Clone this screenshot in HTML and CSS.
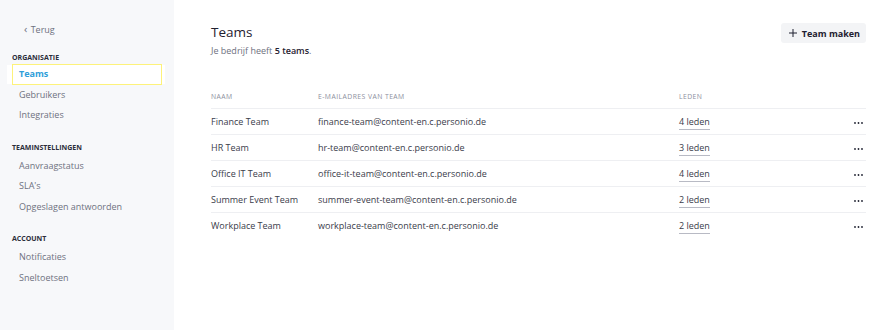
FILE: index.html
```html
<!DOCTYPE html>
<html lang="nl">
<head>
  <meta charset="UTF-8">
  <title>Teams</title>
  <link rel="stylesheet" href="styles.css">
</head>
<body>
  <aside class="sidebar">
    <a class="back" href="#"><span class="chev">&lsaquo;</span> Terug</a>

    <div class="group">
      <div class="group-title">Organisatie</div>
      <a class="nav-item active" href="#">Teams</a>
      <a class="nav-item" href="#">Gebruikers</a>
      <a class="nav-item" href="#">Integraties</a>
    </div>

    <div class="group">
      <div class="group-title">Teaminstellingen</div>
      <a class="nav-item" href="#">Aanvraagstatus</a>
      <a class="nav-item" href="#">SLA's</a>
      <a class="nav-item" href="#">Opgeslagen antwoorden</a>
    </div>

    <div class="group">
      <div class="group-title">Account</div>
      <a class="nav-item" href="#">Notificaties</a>
      <a class="nav-item" href="#">Sneltoetsen</a>
    </div>
  </aside>

  <main class="main">
    <div class="head">
      <div>
        <h1>Teams</h1>
        <p class="sub">Je bedrijf heeft <strong>5 teams</strong>.</p>
      </div>
      <button class="btn">
        <svg width="8" height="8" viewBox="0 0 8 8"><path d="M4 0v8M0 4h8" stroke="#1f2130" stroke-width="1" fill="none"/></svg>
        Team maken
      </button>
    </div>

    <table class="teams">
      <thead>
        <tr>
          <th class="c-name">Naam</th>
          <th class="c-mail">E-mailadres van team</th>
          <th class="c-members">Leden</th>
          <th class="c-more"></th>
        </tr>
      </thead>
      <tbody>
        <tr>
          <td>Finance Team</td>
          <td>finance-team@content-en.c.personio.de</td>
          <td><span class="members">4 leden</span></td>
          <td class="more"><svg width="9" height="2" viewBox="0 0 9 2"><circle cx="1" cy="1" r="0.9"/><circle cx="4.5" cy="1" r="0.9"/><circle cx="8" cy="1" r="0.9"/></svg></td>
        </tr>
        <tr>
          <td>HR Team</td>
          <td>hr-team@content-en.c.personio.de</td>
          <td><span class="members">3 leden</span></td>
          <td class="more"><svg width="9" height="2" viewBox="0 0 9 2"><circle cx="1" cy="1" r="0.9"/><circle cx="4.5" cy="1" r="0.9"/><circle cx="8" cy="1" r="0.9"/></svg></td>
        </tr>
        <tr>
          <td>Office IT Team</td>
          <td>office-it-team@content-en.c.personio.de</td>
          <td><span class="members">4 leden</span></td>
          <td class="more"><svg width="9" height="2" viewBox="0 0 9 2"><circle cx="1" cy="1" r="0.9"/><circle cx="4.5" cy="1" r="0.9"/><circle cx="8" cy="1" r="0.9"/></svg></td>
        </tr>
        <tr>
          <td>Summer Event Team</td>
          <td>summer-event-team@content-en.c.personio.de</td>
          <td><span class="members">2 leden</span></td>
          <td class="more"><svg width="9" height="2" viewBox="0 0 9 2"><circle cx="1" cy="1" r="0.9"/><circle cx="4.5" cy="1" r="0.9"/><circle cx="8" cy="1" r="0.9"/></svg></td>
        </tr>
        <tr>
          <td>Workplace Team</td>
          <td>workplace-team@content-en.c.personio.de</td>
          <td><span class="members">2 leden</span></td>
          <td class="more"><svg width="9" height="2" viewBox="0 0 9 2"><circle cx="1" cy="1" r="0.9"/><circle cx="4.5" cy="1" r="0.9"/><circle cx="8" cy="1" r="0.9"/></svg></td>
        </tr>
      </tbody>
    </table>
  </main>
</body>
</html>
```

FILE: styles.css
```css
body {
  margin: 0;
  font-family: 'Open Sans', sans-serif;
  color: #3a3c4a;
  background: white;
  display: flex;
  height: 330px;
  overflow: hidden;
}

a {
  text-decoration: none;
}

.sidebar {
  width: 174px;
  flex-shrink: 0;
  background: #f7f8fa;
  padding: 21px 12px 0;
  box-sizing: border-box;
}

.back {
  display: block;
  color: #6e7180;
  font-size: 9px;
  padding-left: 12px;
  line-height: 16px;
  margin-bottom: 15px;
}

.back .chev {
  font-size: 11px;
  margin-right: 1px;
}

.group {
  margin-bottom: 17px;
}

.group-title {
  font-size: 7px;
  font-weight: 700;
  text-transform: uppercase;
  color: #2c2e3b;
  line-height: 10px;
  margin-bottom: 3px;
}

.nav-item {
  display: block;
  font-size: 9px;
  color: #6e7180;
  line-height: 20.5px;
  padding-left: 7px;
}

.nav-item.active {
  margin-top: -2px;
  color: #2f9ed9;
  font-weight: 700;
  background: white;
  outline: 1.5px solid #fdf27a;
  outline-offset: -1.5px;
  box-shadow: -6px 0 0 -1px white, 4px 0 0 -1px white;
}

.main {
  flex: 1;
  padding: 22px 24px 0 37px;
}

.head {
  display: flex;
  justify-content: space-between;
  align-items: flex-start;
  margin-bottom: 31px;
}

h1 {
  font-size: 13.5px;
  font-weight: 400;
  color: #1f2130;
  margin: 0 0 3px;
  line-height: 20px;
}

.sub {
  font-size: 9px;
  line-height: 12px;
  color: #6e7180;
  margin: 0;
}

.sub strong {
  color: #1f2130;
  font-weight: 600;
}

.btn {
  display: flex;
  align-items: center;
  gap: 5px;
  margin-top: 1px;
  height: 20px;
  padding: 0 6px 0 8px;
  background: #f3f4f6;
  border: none;
  border-radius: 3px;
  font-family: 'Open Sans', sans-serif;
  font-size: 9px;
  font-weight: 700;
  color: #1f2130;
}

.teams {
  width: 100%;
  border-collapse: collapse;
}

.teams th {
  text-align: left;
  font-size: 6.8px;
  font-weight: 400;
  letter-spacing: 0.45px;
  text-transform: uppercase;
  color: #8d90a0;
  line-height: 17px;
  padding: 0 0 3px;
  border-bottom: 1px solid #eeeff2;
}

.teams td {
  font-size: 9px;
  color: #3a3c4a;
  height: 25px;
  padding: 0;
  border-bottom: 1px solid #eeeff2;
}

.teams tbody tr:last-child td {
  border-bottom: none;
}

.c-name {
  width: 107px;
}

.c-mail {
  width: 361px;
}

.members {
  border-bottom: 1px solid #b8bac4;
  padding-bottom: 1px;
}

.more {
  text-align: right;
  padding-right: 3px !important;
}

.more svg {
  fill: #1f2130;
  vertical-align: middle;
}
```
